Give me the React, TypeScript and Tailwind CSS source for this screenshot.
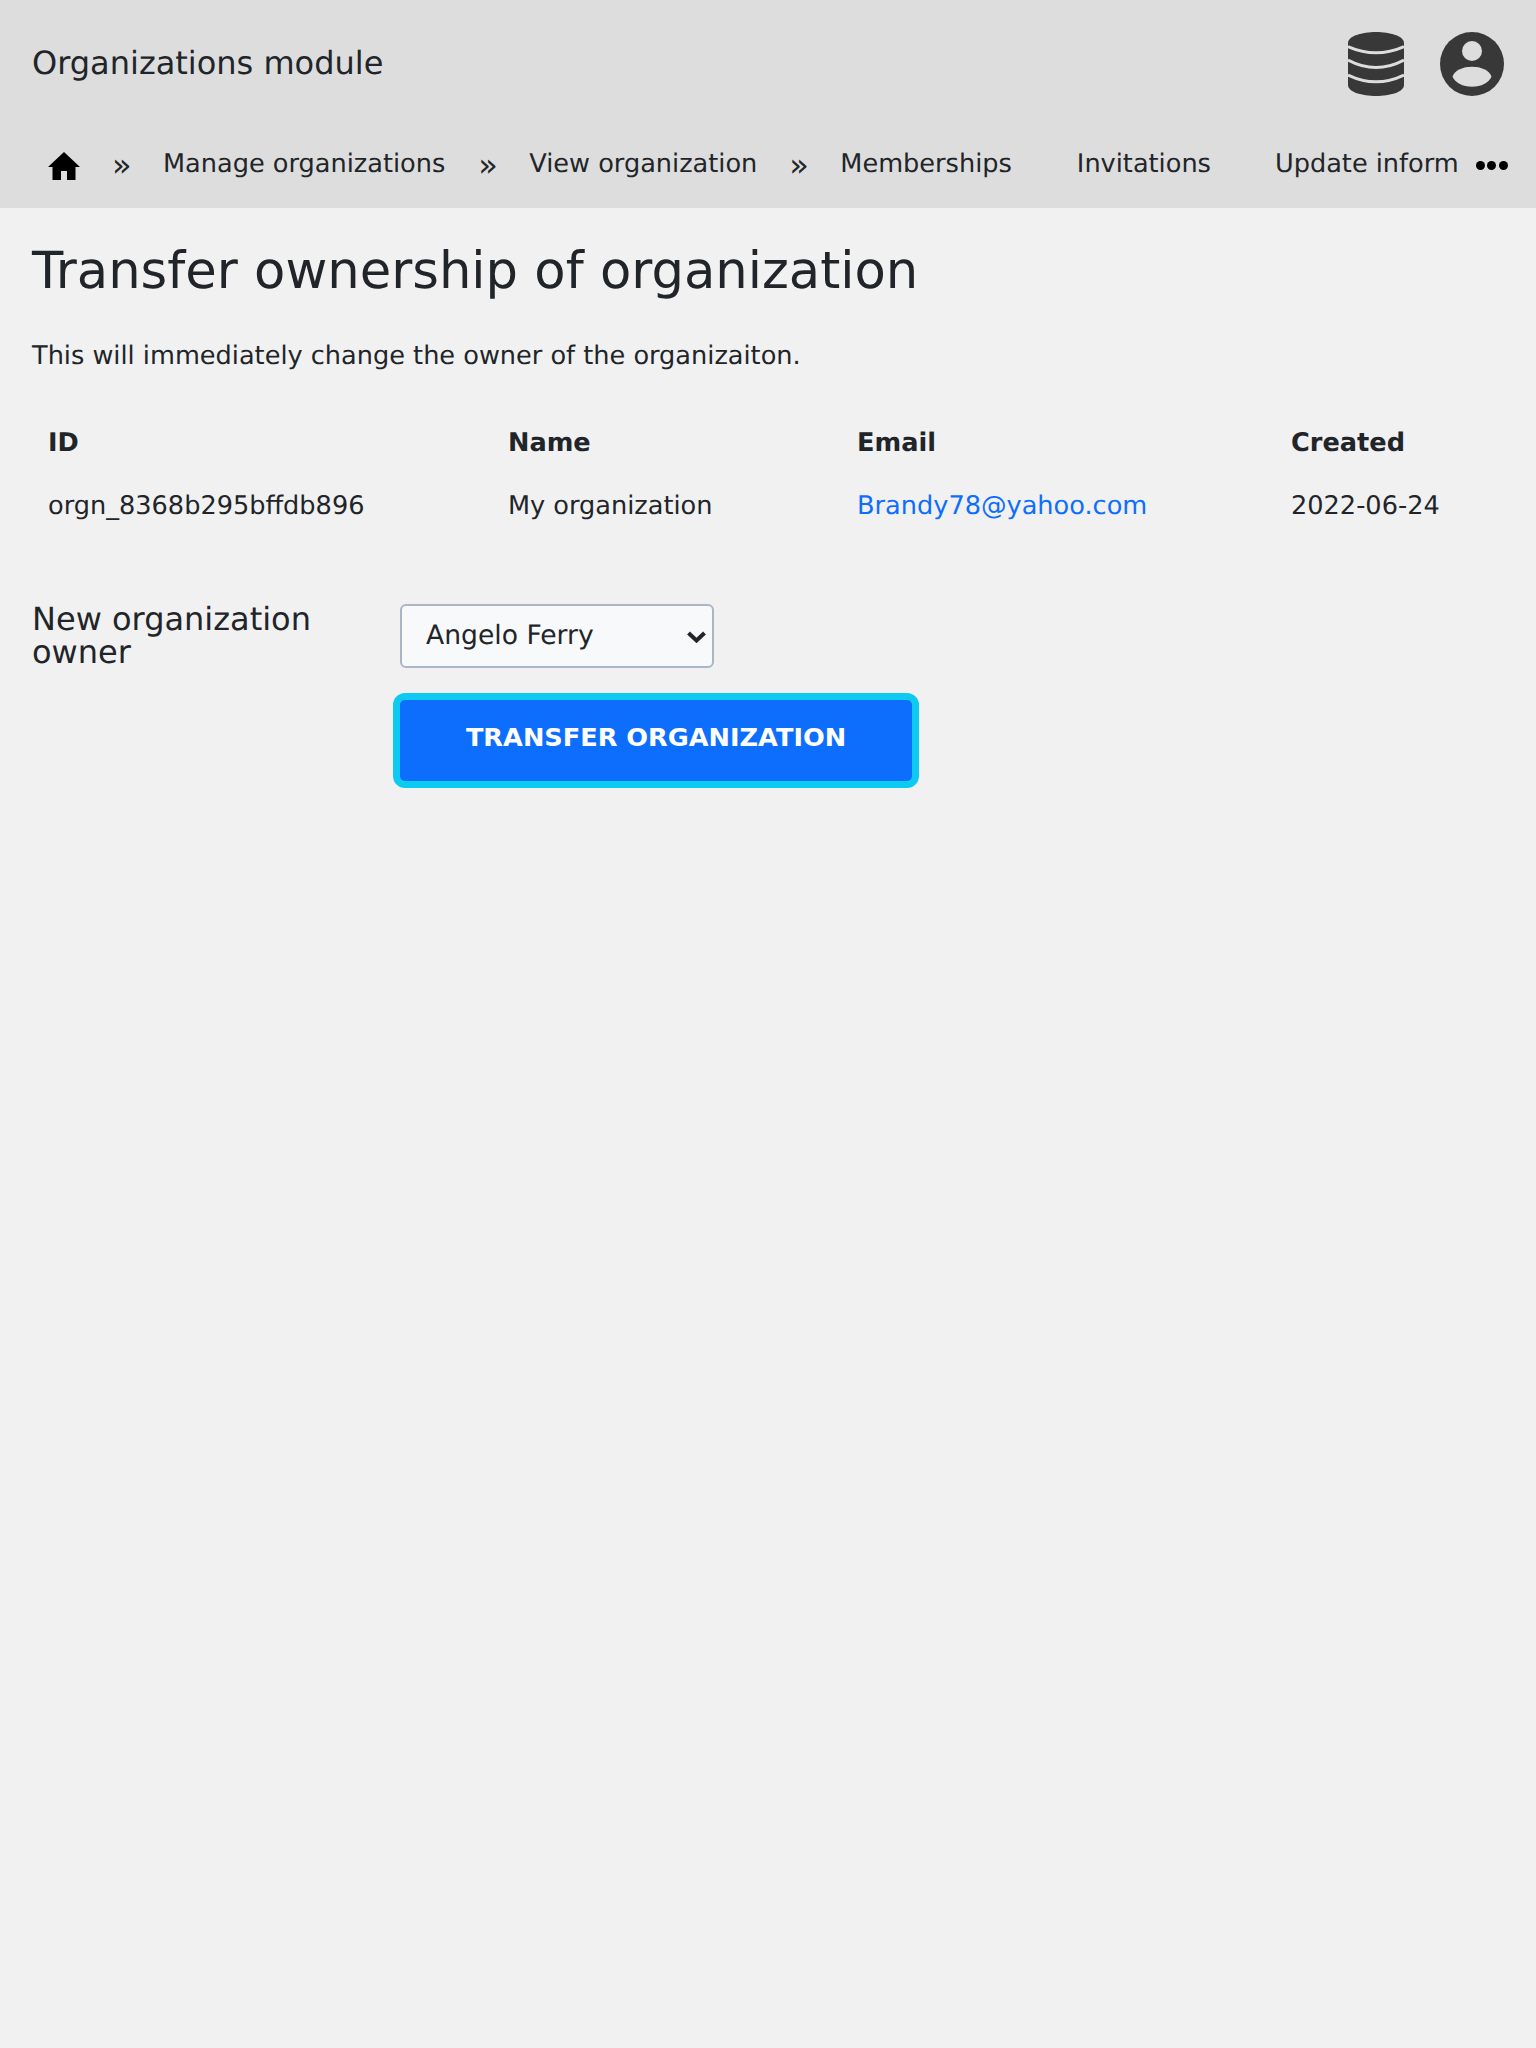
const font = { fontFamily: '"DejaVu Sans", sans-serif' };

const Sep = () => <span className="mr-[33px] -ml-[1px] w-[18px] shrink-0 pt-[1px] text-[32px] leading-[26px] text-[#212529]">»</span>;

const NavLink = ({ label }: { label: string }) => (
  <a className="shrink-0 whitespace-nowrap text-[25.6px] leading-[26px] text-[#212529]">{label}</a>
);

const App = () => {
  return (
    <div className="min-h-[2048px] bg-[#f1f1f1] text-[#212529] [font-family:'DejaVu_Sans',sans-serif] [text-rendering:geometricPrecision]">
      <header className="h-[208px] bg-[#dddddd]">
        <div className="flex h-[127px] items-center justify-between px-[32px]">
          <span className="-mt-[2px] text-[32px]">Organizations module</span>
          <div className="flex items-center gap-[36px]">
            <svg width="56" height="64" viewBox="0 0 56 64">
              <path fill="#383838" d="M0 11C0 4 14 0 28 0s28 4 28 11v42c0 7-14 11-28 11S0 60 0 53Z" />
              <path fill="none" stroke="#dddddd" strokeWidth="3" d="M0 14.500Q28 27 56 14.500M0 28Q28 43 56 28M0 43Q28 56.500 56 43" />
            </svg>
            <svg width="64" height="64" viewBox="0 0 64 64">
              <circle cx="32" cy="32" r="32" fill="#383838" />
              <circle cx="32" cy="19" r="10" fill="#dddddd" />
              <path fill="#dddddd" d="M12.500 44.500C15 38 23 34.700 32 34.700S49 38 51.500 44.500C49 51 41 54.700 32 54.700S15 51 12.500 44.500Z" />
            </svg>
          </div>
        </div>
        <nav className="flex h-[81px] items-start pl-[48px] pt-[24px]">
          <svg width="32" height="28" viewBox="0 0 32 28" className="mr-[33px] mt-[1px] shrink-0" fill="#000">
            <path d="M16 0 0 15h4.500v13h8.500v-9h6v9h8.500V15H32Z" />
          </svg>
          <Sep />
          <NavLink label="Manage organizations" />
          <span className="ml-[34px]" />
          <Sep />
          <NavLink label="View organization" />
          <span className="ml-[33px]" />
          <Sep />
          <NavLink label="Memberships" />
          <span className="ml-[65px]" />
          <NavLink label="Invitations" />
          <span className="ml-[64px]" />
          <div className="w-[183px] shrink-0 overflow-hidden leading-[26px]">
            <NavLink label="Update information" />
          </div>
          <div className="ml-[18px] mt-[10px] flex shrink-0 gap-[2.500px]">
            <span className="h-[9px] w-[9px] rounded-full bg-black" />
            <span className="h-[9px] w-[9px] rounded-full bg-black" />
            <span className="h-[9px] w-[9px] rounded-full bg-black" />
          </div>
        </nav>
      </header>

      <main className="px-[32px]" style={font}>
        <h1 className="pt-[33px] text-[51.2px] leading-[1.2] font-normal">Transfer ownership of organization</h1>
        <p className="mt-[35px] text-[25.6px] leading-[38.4px]">This will immediately change the owner of the organizaiton.</p>

        <table className="mt-[35px] w-[1472px] table-fixed border-collapse text-[25.6px]">
          <thead>
            <tr className="h-[64px] text-left">
              <th className="w-[460px] px-[16px] font-bold">ID</th>
              <th className="w-[349px] px-[16px] font-bold">Name</th>
              <th className="w-[434px] px-[16px] font-bold">Email</th>
              <th className="px-[16px] font-bold">Created</th>
            </tr>
          </thead>
          <tbody>
            <tr className="h-[63px]">
              <td className="px-[16px]">orgn_8368b295bffdb896</td>
              <td className="px-[16px]">My organization</td>
              <td className="px-[16px]"><a className="text-[#0d6efd]">Brandy78@yahoo.com</a></td>
              <td className="px-[16px]">2022-06-24</td>
            </tr>
          </tbody>
        </table>

        <form className="mt-[66px] flex">
          <label className="-mt-[1px] w-[368px] text-[32px] leading-[33px]">New organization owner</label>
          <div className="flex flex-col items-start">
            <div className="relative flex h-[64px] w-[314px] items-center rounded-[6px] border-2 border-[#aab6c5] bg-[#f8f9fa] pl-[24px] text-[26.6px]">
              Angelo Ferry
              <svg width="19" height="12" viewBox="0 0 19 12" className="absolute right-[6px] top-[25px]" fill="none" stroke="#212529" strokeWidth="4">
                <path d="M1.500 2l8 7.500 8-7.500" />
              </svg>
            </div>
            <button type="button" className="mt-[25px] -ml-[7px] h-[95px] w-[526px] rounded-[12px] border-[7px] border-[#0dcaf0] bg-[#0d6efd] pb-[6px] text-[25.6px] font-bold text-white">
              TRANSFER ORGANIZATION
            </button>
          </div>
        </form>
      </main>
    </div>
  );
};

export default App;
